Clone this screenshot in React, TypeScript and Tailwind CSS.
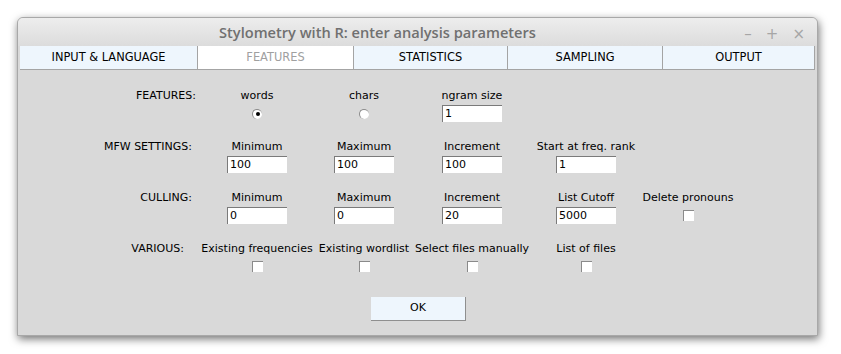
import type { ReactNode } from 'react';

const tabs = ['INPUT & LANGUAGE', 'FEATURES', 'STATISTICS', 'SAMPLING', 'OUTPUT'];
const tabWidths = ['w-[178px]', 'w-[156px]', 'w-[154px]', 'w-[155px]', 'flex-1'];
const colWidths = ['w-[114px]', 'w-[100px]', 'w-[116px]', 'w-[112px]', 'w-[92px]'];

function Field({ value }: { value: string }) {
  return (
    <div className="h-[17px] w-[60px] border-l border-t border-[#7a7a7a] bg-white pl-[2px] text-[11px] leading-[16px] text-black">
      {value}
    </div>
  );
}

function Check() {
  return <div className="h-[11px] w-[11px] border-l border-t border-[#8a8a8a] bg-white" />;
}

function Radio({ on }: { on?: boolean }) {
  return (
    <div className="flex h-[10px] w-[10px] items-center justify-center rounded-full border-l border-t border-[#8a8a8a] bg-white">
      {on && <div className="h-[4px] w-[4px] rounded-full bg-black" />}
    </div>
  );
}

function Row({ label, pr, cells }: { label: string; pr: string; cells: [string, ReactNode][] }) {
  return (
    <div className="flex h-[35px]">
      <div className={`w-[180px] text-right text-[11px] leading-[16px] ${pr}`}>{label}</div>
      {cells.map(([t, c], i) => (
        <div key={t + i} className={`flex flex-col items-center ${colWidths[i]}`}>
          <div className="whitespace-nowrap text-[11px] leading-[16px]">{t}</div>
          <div className="flex h-[19px] items-center">{c}</div>
        </div>
      ))}
    </div>
  );
}

export default function App() {
  return (
    <div className="h-[354px] w-[841px] bg-white pl-[17px] pt-[17px]" style={{ fontFamily: '"DejaVu Sans", sans-serif' }}>
      <div className="flex h-[319px] w-[801px] flex-col overflow-hidden rounded-t-[6px] border border-[#a8a8a8] bg-[#d9d9d9] shadow-[1px_3px_8px_rgba(0,0,0,0.55)]">
        <div className="relative flex h-[28px] shrink-0 items-center justify-center bg-gradient-to-b from-[#ededed] to-[#dcdcdc] pr-[80px] pt-[2px]">
          <span className="text-[14.6px] font-semibold text-[#707070]" style={{ fontFamily: '"Open Sans", sans-serif' }}>
            Stylometry with R: enter analysis parameters
          </span>
          <div className="absolute right-[12px] top-[5px] flex gap-[14px] text-[15px] text-[#a6a6a6]">
            <span>–</span>
            <span>+</span>
            <span>×</span>
          </div>
        </div>
        <div className="flex h-[24px] shrink-0 px-[2px]">
          {tabs.map((t, i) => (
            <div
              key={t}
              className={`flex items-center justify-center border-b border-r border-[#a4a4a4] text-[11.4px] ${tabWidths[i]} ${
                i === 1 ? 'bg-white text-[#a0a0a0]' : 'bg-[#eef6fd] text-black'
              }`}
            >
              {t}
            </div>
          ))}
        </div>
        <div className="flex flex-col gap-[16px] px-[2px] pt-[18px] text-black">
          <Row
            label="FEATURES:"
            pr="pr-[4px]"
            cells={[
              ['words', <Radio on />],
              ['chars', <Radio />],
              ['ngram size', <Field value="1" />],
            ]}
          />
          <Row
            label="MFW SETTINGS:"
            pr="pr-[8px]"
            cells={[
              ['Minimum', <Field value="100" />],
              ['Maximum', <Field value="100" />],
              ['Increment', <Field value="100" />],
              ['Start at freq. rank', <Field value="1" />],
            ]}
          />
          <Row
            label="CULLING:"
            pr="pr-[8px]"
            cells={[
              ['Minimum', <Field value="0" />],
              ['Maximum', <Field value="0" />],
              ['Increment', <Field value="20" />],
              ['List Cutoff', <Field value="5000" />],
              ['Delete pronouns', <Check />],
            ]}
          />
          <Row
            label="VARIOUS:"
            pr="pr-[16px]"
            cells={[
              ['Existing frequencies', <Check />],
              ['Existing wordlist', <Check />],
              ['Select files manually', <Check />],
              ['List of files', <Check />],
            ]}
          />
          <div className="flex justify-center pl-[2px] pt-[5px]">
            <button className="h-[24px] w-[95px] border-b border-r border-[#8f8f8f] bg-[#eef6fd] text-[11px] text-black">OK</button>
          </div>
        </div>
      </div>
    </div>
  );
}
